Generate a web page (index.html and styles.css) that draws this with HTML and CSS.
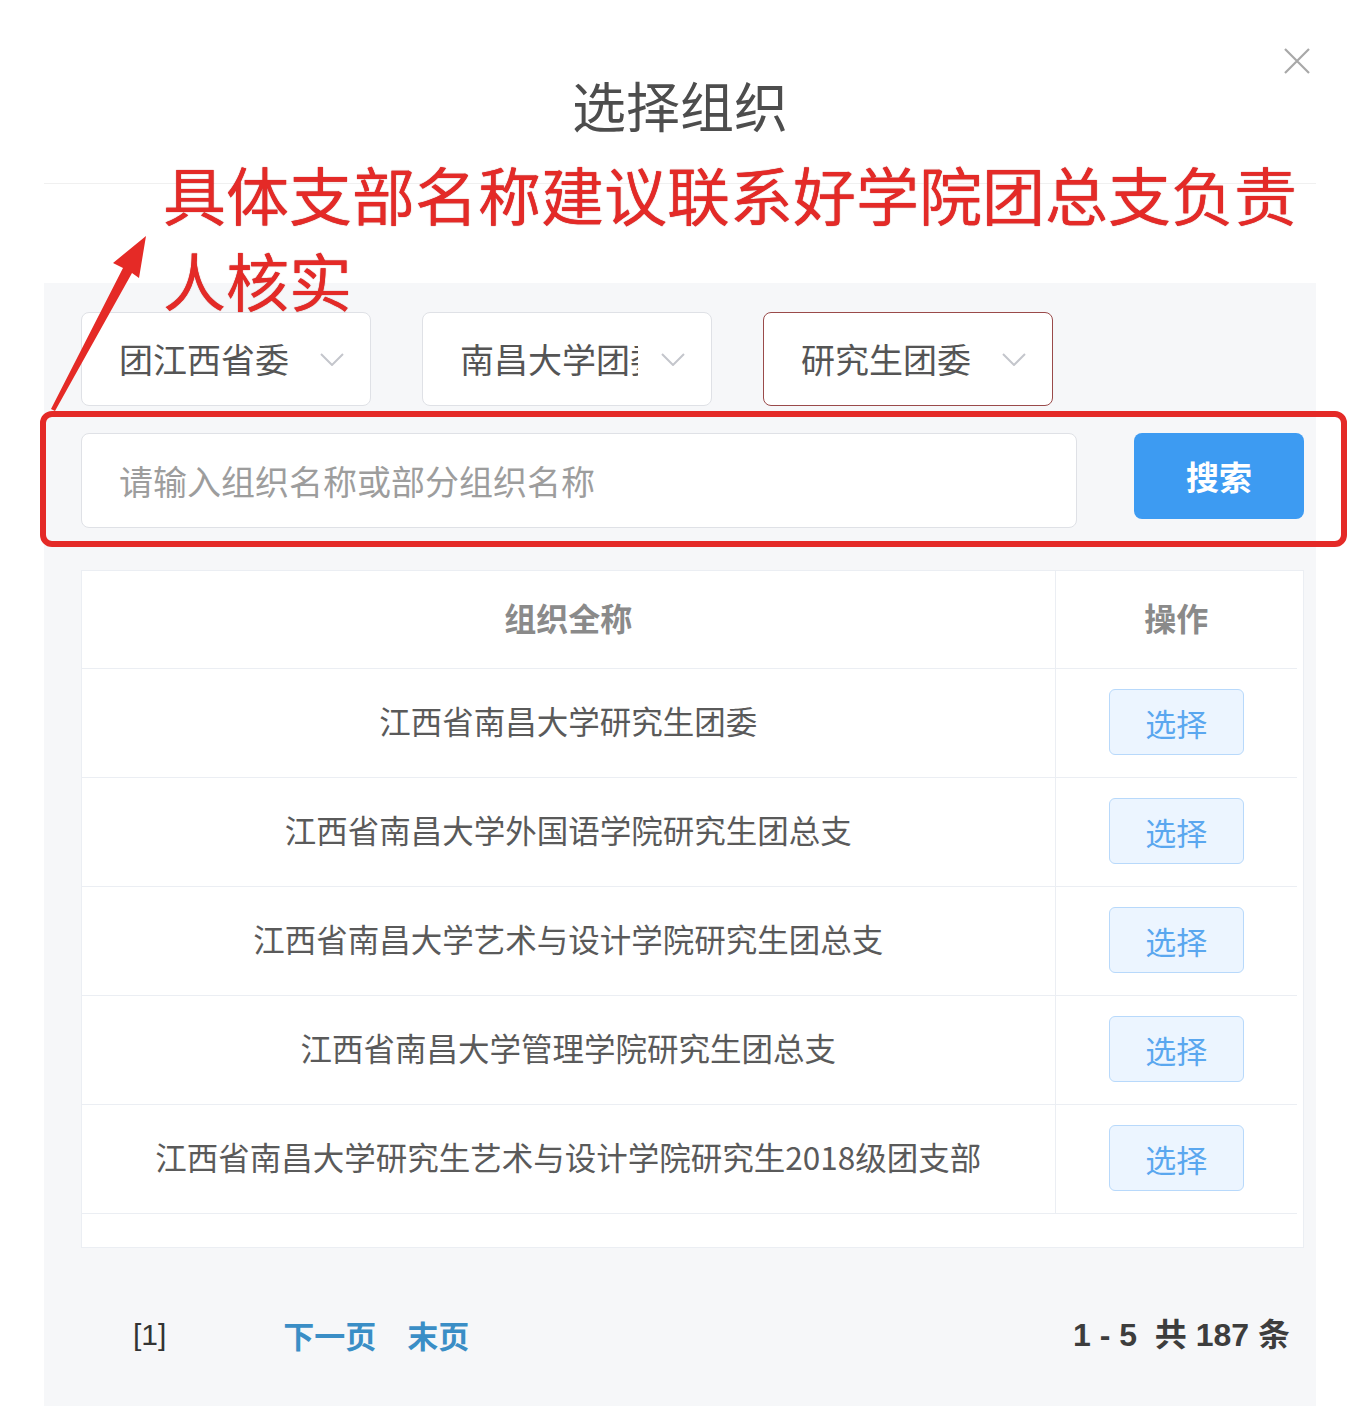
FILE: index.html
```html
<!DOCTYPE html>
<html lang="zh-CN">
<head>
    <meta charset="UTF-8">
    <meta name="viewport" content="width=device-width, initial-scale=1.0">
    <title>选择组织</title>
    <link rel="stylesheet" href="styles.css">
</head>
<body>
    <div class="dialog">
        <div class="dialog-header">
            <h2>选择组织</h2>
            <span class="close">
                <svg width="28" height="28" viewBox="0 0 28 28"><path d="M2 2 L26 26 M26 2 L2 26" stroke="#a8a8a8" stroke-width="2.2" fill="none"/></svg>
            </span>
        </div>

        <div class="panel">
            <div class="select-row">
                <div class="select">
                    <span class="select-text">团江西省委</span>
                    <svg class="chevron" width="24" height="13" viewBox="0 0 24 13"><path d="M1 1 L12 12 L23 1" stroke="#c4c6cc" stroke-width="2" fill="none"/></svg>
                </div>
                <div class="select">
                    <span class="select-text select-clip">南昌大学团委</span>
                    <svg class="chevron" width="24" height="13" viewBox="0 0 24 13"><path d="M1 1 L12 12 L23 1" stroke="#c4c6cc" stroke-width="2" fill="none"/></svg>
                </div>
                <div class="select select-active">
                    <span class="select-text">研究生团委</span>
                    <svg class="chevron" width="24" height="13" viewBox="0 0 24 13"><path d="M1 1 L12 12 L23 1" stroke="#c4c6cc" stroke-width="2" fill="none"/></svg>
                </div>
            </div>

            <div class="search-row">
                <input type="text" class="search-input" placeholder="请输入组织名称或部分组织名称">
                <button class="btn-search">搜索</button>
            </div>

            <div class="table-box">
                <table>
                    <thead>
                        <tr>
                            <th class="col-name">组织全称</th>
                            <th class="col-op">操作</th>
                        </tr>
                    </thead>
                    <tbody>
                        <tr>
                            <td>江西省南昌大学研究生团委</td>
                            <td class="col-op"><button class="btn-choose">选择</button></td>
                        </tr>
                        <tr>
                            <td>江西省南昌大学外国语学院研究生团总支</td>
                            <td class="col-op"><button class="btn-choose">选择</button></td>
                        </tr>
                        <tr>
                            <td>江西省南昌大学艺术与设计学院研究生团总支</td>
                            <td class="col-op"><button class="btn-choose">选择</button></td>
                        </tr>
                        <tr>
                            <td>江西省南昌大学管理学院研究生团总支</td>
                            <td class="col-op"><button class="btn-choose">选择</button></td>
                        </tr>
                        <tr>
                            <td>江西省南昌大学研究生艺术与设计学院研究生2018级团支部</td>
                            <td class="col-op"><button class="btn-choose">选择</button></td>
                        </tr>
                    </tbody>
                </table>
            </div>

            <div class="pager">
                <span class="page-now">[1]</span>
                <a class="page-link page-next">下一页</a>
                <a class="page-link">末页</a>
                <span class="page-total">1 - 5&nbsp; 共 187 条</span>
            </div>
        </div>

        <!-- 标注 -->
        <div class="note-text">具体支部名称建议联系好学院团总支负责人核实</div>
        <div class="note-box"></div>
        <svg class="note-arrow" width="200" height="420" viewBox="0 0 200 420">
            <polygon points="146,236 139,278 132,273 55,411 51,409 123,268 113,263" fill="#e52a26"/>
        </svg>
    </div>
</body>
</html>
```

FILE: styles.css
```css
* {
    box-sizing: border-box;
}
body {
    margin: 0;
    background: #fff;
    font-family: "Noto Sans CJK SC", "Liberation Sans", sans-serif;
    color: #555;
}
.dialog {
    position: relative;
    width: 1356px;
    height: 1406px;
    overflow: hidden;
}
.dialog-header {
    position: relative;
    margin: 0 40px 0 44px;
    height: 184px;
    padding-top: 73px;
    border-bottom: 1px solid #f0f0f0;
    text-align: center;
}
.dialog-header h2 {
    margin: 0;
    font-size: 54px;
    line-height: 64px;
    font-weight: 400;
    color: #4d4d4d;
}
.close {
    position: absolute;
    top: 47px;
    right: 5px;
    width: 28px;
    height: 28px;
}
.panel {
    margin: 99px 40px 0 44px;
    height: 1123px;
    padding: 29px 12px 0 37px;
    background: #f6f7f9;
}
.select-row {
    display: flex;
    gap: 51px;
}
.select {
    width: 290px;
    height: 94px;
    display: flex;
    align-items: center;
    padding: 0 26px 0 37px;
    background: #fff;
    border: 1px solid #dfe1e6;
    border-radius: 8px;
}
.select-active {
    border: 1.5px solid #9a4a4a;
}
.select-text {
    white-space: nowrap;
    font-size: 34px;
    line-height: 40px;
    color: #555;
}
.select-clip {
    width: 178px;
    overflow: hidden;
}
.chevron {
    margin-left: auto;
}
.search-row {
    display: flex;
    align-items: flex-start;
    justify-content: space-between;
    margin-top: 27px;
}
.search-input {
    width: 996px;
    height: 95px;
    padding: 0 37px;
    border: 1px solid #dfe1e6;
    border-radius: 8px;
    background: #fff;
    font-family: inherit;
    font-size: 34px;
    color: #555;
    outline: none;
}
.search-input::placeholder {
    color: #9d9d9d;
}
.btn-search {
    width: 170px;
    height: 86px;
    border: none;
    border-radius: 8px;
    background: #3d9bf2;
    color: #fff;
    font-family: inherit;
    font-size: 33px;
    font-weight: bold;
}
.table-box {
    margin-top: 42px;
    padding: 0 6px 33px 0;
    background: #fff;
    border: 1px solid #ebeef3;
}
table {
    width: 100%;
    border-collapse: collapse;
}
th {
    height: 97px;
    padding-bottom: 5px;
    font-size: 32px;
    font-weight: bold;
    color: #8a8a8a;
    border-bottom: 1px solid #ebeef3;
}
td {
    height: 109px;
    padding-bottom: 7px;
    text-align: center;
    font-size: 31.5px;
    color: #5a5a5a;
    border-bottom: 1px solid #ebeef3;
}
.col-name {
    width: 973px;
}
.col-op {
    border-left: 1px solid #ebeef3;
    text-align: center;
}
td.col-op {
    padding-bottom: 2px;
}
.btn-choose {
    width: 135px;
    height: 66px;
    border: 1px solid #b8d9fb;
    border-radius: 6px;
    background: #ecf5ff;
    color: #5aa7ef;
    font-family: inherit;
    font-size: 31px;
}
.pager {
    display: flex;
    align-items: center;
    margin-top: 67px;
    padding: 0 14px 0 52px;
    line-height: 40px;
}
.page-now {
    font-family: "Liberation Sans", sans-serif;
    font-size: 30px;
    color: #333;
}
.page-link {
    font-size: 31px;
    font-weight: bold;
    color: #3a8ec6;
    margin-left: 31px;
}
.page-next {
    margin-left: 117px;
}
.page-total {
    margin-left: auto;
    font-family: "Liberation Sans", "Noto Sans CJK SC", sans-serif;
    font-size: 32px;
    font-weight: bold;
    color: #3d3d3d;
}
.note-text {
    position: absolute;
    left: 163px;
    top: 150px;
    width: 1160px;
    font-size: 63px;
    line-height: 86px;
    color: #e42a27;
    text-shadow: 0 0 1px #a81c1c;
}
.note-box {
    position: absolute;
    left: 40px;
    top: 411px;
    width: 1307px;
    height: 136px;
    border: 6px solid #e42a27;
    border-radius: 12px;
}
.note-arrow {
    position: absolute;
    left: 0;
    top: 0;
}
```
